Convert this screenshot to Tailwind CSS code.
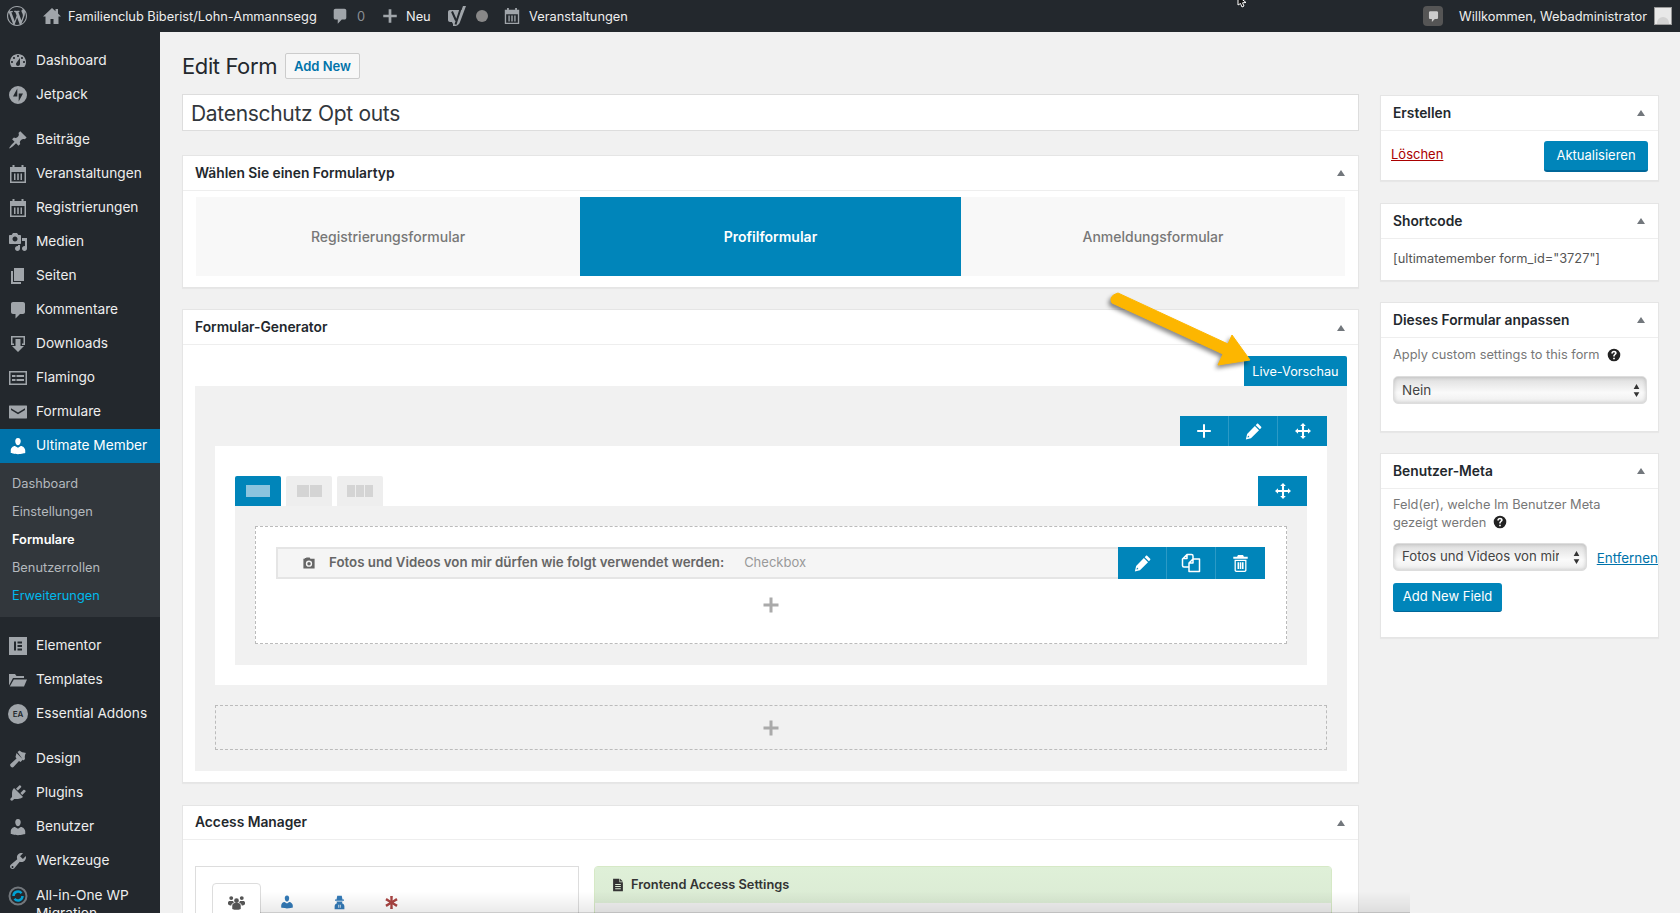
<!DOCTYPE html>
<html lang="de">
<head>
<meta charset="UTF-8">
<title>Edit Form</title>
<script src="https://cdn.jsdelivr.net/npm/@tailwindcss/browser@4"></script>
</head>
<body class="relative h-[913px] overflow-hidden bg-[#f1f1f1] font-['Inter','Liberation_Sans',sans-serif] text-[13px] text-[#444]">

<svg class="hidden">
  <symbol id="i-wp" viewBox="0 0 20 20"><path d="M20 10c0-5.510-4.490-10-10-10C4.480 0 0 4.490 0 10c0 5.520 4.480 10 10 10 5.510 0 10-4.480 10-10zM7.780 15.370L4.370 6.220c.55-.020 1.170-.080 1.170-.080.5-.060.44-1.130-.060-1.110 0 0-1.450.110-2.370.110-.18 0-.37 0-.58-.010C4.120 2.690 6.870 1.110 10 1.110c2.330 0 4.450.870 6.050 2.340-.68-.110-1.650.39-1.650 1.580 0 .74.450 1.360.900 2.100.35.610.550 1.360.550 2.460 0 1.490-1.400 5-1.400 5l-3.030-8.370c.54-.020.820-.170.820-.170.5-.050.44-1.250-.060-1.220 0 0-1.440.120-2.380.120-.870 0-2.330-.120-2.330-.120-.5-.030-.560 1.200-.060 1.220l.92.080 1.260 3.410zM17.410 10c.24-.640.740-1.870.430-4.250.7 1.290 1.050 2.710 1.050 4.250 0 3.290-1.730 6.240-4.400 7.780.97-2.590 1.940-5.200 2.920-7.780zM6.100 18.090C3.120 16.650 1.110 13.530 1.110 10c0-1.300.23-2.480.72-3.590C3.250 10.300 4.670 14.200 6.100 18.090zm4.030-6.630l2.580 6.980c-.86.290-1.740.450-2.710.450-.79 0-1.570-.110-2.290-.330.81-2.380 1.620-4.740 2.420-7.100z"/></symbol>
  <symbol id="i-home" viewBox="0 0 20 20"><path d="M10 2L1 10.500h2.500V18h5v-5h3v5h5v-7.500H19L16 7.600V3h-2.500v2.300z"/></symbol>
  <symbol id="i-comment" viewBox="0 0 20 20"><path d="M5 2h10c1.100 0 2 .9 2 2v8c0 1.100-.9 2-2 2h-3l-4.500 4.500V14H5c-1.100 0-2-.9-2-2V4c0-1.100.9-2 2-2z"/></symbol>
  <symbol id="i-plus" viewBox="0 0 20 20"><path d="M8.500 2.500h3v6h6v3h-6v6h-3v-6h-6v-3h6z"/></symbol>
  <symbol id="i-plus-mid" viewBox="0 0 20 20"><path d="M8.750 1.500h2.500v7.250h7.250v2.500h-7.250v7.250h-2.500v-7.250H1.500v-2.500h7.250z"/></symbol>
  <symbol id="i-yoast" viewBox="0 0 20 20"><path d="M4 4h11.500l1.500-4h3l-6 16c-.7 2-2 3.500-4.500 4H7v-2.500h-.5L6 16H4c-1.100 0-2-.9-2-2V6c0-1.100.9-2 2-2z"/><path d="M6 5.500l4 9M14.500 3L9.500 18.500" fill="none" stroke="#23282d" stroke-width="2"/></symbol>
  <symbol id="i-cal" viewBox="0 0 20 20"><path fill-rule="evenodd" d="M2 3h2.500V1h2v2h7V1h2v2H18v16H2zm1.500 5v9.500h13V8zM6 9.500h1.500V16H6zm3.200 0h1.600V16H9.200zm3.300 0H14V16h-1.500z"/></symbol>
  <symbol id="i-dash" viewBox="0 0 20 20"><path fill-rule="evenodd" d="M3.760 16h12.480c1.100-1.370 1.760-3.110 1.760-5 0-4.420-3.580-8-8-8s-8 3.580-8 8c0 1.890.66 3.630 1.760 5zM10 4c.55 0 1 .45 1 1s-.45 1-1 1-1-.45-1-1 .45-1 1-1zM6 6c.55 0 1 .45 1 1s-.45 1-1 1-1-.45-1-1 .45-1 1-1zm8 0c.55 0 1 .45 1 1s-.45 1-1 1-1-.45-1-1 .45-1 1-1zm-5.370 5.550L12 7v6c0 1.100-.9 2-2 2s-2-.9-2-2c0-.57.24-1.080.63-1.450zM4 10c.55 0 1 .45 1 1s-.45 1-1 1-1-.45-1-1 .45-1 1-1zm12 0c.55 0 1 .45 1 1s-.45 1-1 1-1-.45-1-1 .45-1 1-1z"/></symbol>
  <symbol id="i-jetpack" viewBox="0 0 20 20"><path fill-rule="evenodd" d="M10 1a9 9 0 1 0 0 18 9 9 0 0 0 0-18zM9.300 3.500v8H5zm1.400 13v-8H15z"/></symbol>
  <symbol id="i-pin" viewBox="0 0 20 20"><path d="M10.440 3.020l1.820-1.820 6.360 6.350-1.830 1.820c-1.050-.68-2.480-.57-3.410.36l-.75.75c-.92.93-1.040 2.350-.35 3.410l-1.830 1.820-2.410-2.410-2.800 2.790c-.42.42-3.380 2.710-3.800 2.290s1.860-3.390 2.280-3.810l2.790-2.790L4.100 9.360l1.830-1.820c1.050.69 2.480.57 3.400-.36l.75-.75c.93-.92 1.050-2.350.36-3.410z"/></symbol>
  <symbol id="i-media" viewBox="0 0 20 20"><path fill-rule="evenodd" d="M13 11V4c0-.55-.45-1-1-1h-1.670L9 1H5L3.670 3H2c-.55 0-1 .45-1 1v7c0 .55.45 1 1 1h10c.55 0 1-.45 1-1zM7 4.500c1.380 0 2.500 1.120 2.500 2.500S8.380 9.500 7 9.500 4.500 8.380 4.500 7 5.620 4.500 7 4.500zM14 6h5v10.500c0 1.380-1.120 2.500-2.500 2.500S14 17.880 14 16.500s1.120-2.500 2.500-2.500c.17 0 .34.020.5.050V9h-3V6zm-4 8.050V13h2v3.500c0 1.380-1.120 2.500-2.500 2.500S7 17.880 7 16.500 8.120 14 9.500 14c.17 0 .34.020.5.050z"/></symbol>
  <symbol id="i-page" viewBox="0 0 20 20"><path d="M6 15V2h10v13H6zm-1 1h8v2H3V5h2v11z"/></symbol>
  <symbol id="i-down" viewBox="0 0 20 20"><path fill-rule="evenodd" d="M3 2h14v9h-3V9.500h1.500v-6h-11v6H6V11H3zM7.500 5h5v7H16l-6 6-6-6h3.500z"/></symbol>
  <symbol id="i-flamingo" viewBox="0 0 20 20"><path fill-rule="evenodd" d="M1 3h18v14H1zm1.500 1.500v11h15v-11zM4 7h3.500v2H4zm4.500 0H16v2H8.500zM4 11h3.500v2H4zm4.500 0H16v2H8.500z"/></symbol>
  <symbol id="i-mail" viewBox="0 0 20 20"><path d="M1.500 3.500h17c.3 0 .5.200.5.500v12c0 .3-.2.500-.5.500h-17c-.3 0-.5-.2-.5-.5V4c0-.3.200-.5.500-.5zM3 6.200v1.700l7 4.300 7-4.300V6.200l-7 4.300z" fill-rule="evenodd"/></symbol>
  <symbol id="i-user" viewBox="0 0 20 20"><path d="M10 9.250c-2.270 0-2.730-3.440-2.730-3.440C7 4.020 7.820 2 9.970 2c2.160 0 2.980 2.020 2.710 3.810 0 0-.41 3.440-2.680 3.440zm0 2.570L12.720 10c2.390 0 4.520 2.330 4.520 4.530v2.490s-3.650 1.130-7.240 1.130c-3.650 0-7.240-1.130-7.240-1.130v-2.490c0-2.250 1.940-4.480 4.150-4.480z"/></symbol>
  <symbol id="i-elementor" viewBox="0 0 20 20"><path fill-rule="evenodd" d="M1 1h18v18H1zm5 4.500v9h2v-9zm3.500 0v2H14v-2zm0 3.500v2H14V9zm0 3.500v2H14v-2z"/></symbol>
  <symbol id="i-folder" viewBox="0 0 20 20"><path d="M1 4h6l1.500 2H16v2H5L1 15.500zM5.800 9.500H19l-3 7H1.800z"/></symbol>
  <symbol id="i-brush" viewBox="0 0 20 20"><path d="M9.500 3l2-1.500c2 1.500 3 2 6.500 2.500-1 1.500-1.500 3.500-1 6l-1.500 1.500zM8.500 4l6.500 6.500-2.500 2.500-1.500-1-5.500 6c-1.500 1.500-4.500-1.500-3-3l6-5.500-1-1.500z"/></symbol>
  <symbol id="i-plug" viewBox="0 0 20 20"><path d="M13.110 4.360L9.870 7.600 8 5.730l3.240-3.240c.35-.34 1.050-.2 1.560.32.52.51.66 1.210.31 1.550zm-8 1.770l.91-1.120 9.010 9.010-1.190.84c-.71.710-2.630 1.160-3.820 1.160H6.140L4.900 17.260c-.59.590-1.540.59-2.120 0-.59-.580-.59-1.530 0-2.120l1.240-1.240v-3.880c0-1.130.4-3.190 1.090-3.890zm7.260 3.970l3.240-3.240c.34-.35 1.040-.21 1.550.31.520.51.66 1.210.31 1.550l-3.240 3.250z"/></symbol>
  <symbol id="i-wrench" viewBox="0 0 20 20"><path fill-rule="evenodd" d="M16.680 9.770c-1.340 1.340-3.300 1.670-4.950.99l-5.410 6.520c-.99.990-2.590.99-3.580 0s-.99-2.590 0-3.580l6.520-5.420c-.68-1.650-.35-3.610.99-4.950 1.280-1.280 3.120-1.620 4.720-1.060l-2.890 2.890 2.820 2.820 2.860-2.870c.53 1.580.18 3.400-1.080 4.660zM3.810 16.740c.39.390 1.030.39 1.420 0 .38-.39.38-1.030 0-1.420-.39-.39-1.030-.39-1.420 0-.39.39-.39 1.030 0 1.420z"/></symbol>
  <symbol id="i-pencil" viewBox="0 0 20 20"><path fill-rule="evenodd" d="M15.500 1l3.500 3.500c.4.400.4 1 0 1.400l-1.500 1.500-4.900-4.900L14.100 1c.4-.4 1-.4 1.400 0zM11.600 3.500l4.900 4.900L7 18l-6 1.500L2.500 13zM3.600 14.800l-.7 2.300 2.300-.7z"/></symbol>
  <symbol id="i-move" viewBox="0 0 20 20"><path d="M10 0l3.500 3.800h-2.200v4.900h4.900V6.500L20 10l-3.800 3.500v-2.200h-4.900v4.900h2.200L10 20l-3.500-3.800h2.200v-4.900H3.800v2.200L0 10l3.800-3.500v2.200h4.900V3.800H6.500z"/></symbol>
  <symbol id="i-copy" viewBox="0 0 20 20"><path fill="none" stroke="currentColor" stroke-width="1.500" stroke-linejoin="round" d="M6 1.500h4.500c1 0 1.500.7 1.500 1.500v3M8 14H3c-.8 0-1.500-.5-1.500-1.500V6L6 1.500V5.500H2 M12 6H18.500V18.500H8V10z M8 10h4V6"/></symbol>
  <symbol id="i-trash" viewBox="0 0 20 20"><path fill-rule="evenodd" d="M7 0h6l1 2h4.500v2.500h-17V2H6zM3 5.500h14V18c0 1.100-.9 2-2 2H5c-1.100 0-2-.9-2-2zM4.500 7v10.500c0 .5.300 1 1 1h9c.7 0 1-.5 1-1V7zM6.500 8.500H8.500v8H6.500zm2.800 0h1.500v8H9.300zm2.300 0h2v8h-2z"/></symbol>
  <symbol id="i-camera" viewBox="0 0 20 20"><path fill-rule="evenodd" d="M6 2h5l1 2h6v14H2V4h2V3h2zm4 4.500a4.500 4.500 0 1 0 0 9 4.500 4.500 0 0 0 0-9zm0 2a2.500 2.500 0 1 1 0 5 2.500 2.500 0 0 1 0-5z"/></symbol>
  <symbol id="i-help" viewBox="0 0 20 20"><path fill-rule="evenodd" d="M10 1a9 9 0 1 0 0 18 9 9 0 0 0 0-18zM8.800 13.800h2.400V16H8.800zM10 4c2.200 0 3.800 1.200 3.800 3.200 0 1.500-.9 2.200-1.800 2.800-.7.500-.9.800-.9 1.600v.4H8.900v-.6c0-1.300.5-2 1.300-2.600.8-.6 1.200-.9 1.200-1.500 0-.7-.6-1.100-1.400-1.100-.9 0-1.500.5-1.600 1.500H6.100C6.200 5.400 7.700 4 10 4z"/></symbol>
  <symbol id="i-doc" viewBox="0 0 20 20"><path fill-rule="evenodd" d="M3 1h9v5h5v13H3zm10 0l4 4h-4zM6 8.500v1.500h8V8.500zm0 3v1.500h8v-1.500zm0 3V16h8v-1.500z"/></symbol>
  <symbol id="i-group" viewBox="0 0 20 20"><path d="M10 5a2.800 2.800 0 1 1 0 5.600A2.800 2.800 0 0 1 10 5zM3.800 2.500a2.300 2.300 0 1 1 0 4.600 2.300 2.300 0 0 1 0-4.600zm12.400 0a2.300 2.300 0 1 1 0 4.600 2.300 2.300 0 0 1 0-4.600zM5 17.500v-3.800c0-2 1.500-3 3-3h4c1.500 0 3 1 3 3v3.800c-3.300 1.400-6.700 1.400-10 0zM0 12V10c0-1 1-1.800 2-1.800h4c.1.800.6 1.500 1.200 1.900-1.800.6-3.200 1.800-3.400 3.500C2.400 13.500 1 13 0 12zm20 0c-1 1-2.400 1.500-3.800 1.600-.2-1.700-1.600-2.900-3.400-3.500.6-.4 1.100-1.100 1.200-1.900h4c1 0 2 .8 2 1.800z"/></symbol>
  <symbol id="i-spy" viewBox="0 0 20 20"><path fill-rule="evenodd" d="M7 1h6l1 5h2v1.500H4V6h2zM6 8.500h8c0 1-.5 2-1 2.500 2 .3 3.500 2 3.500 4v4h-13v-4c0-2 1.500-3.700 3.500-4-.5-.5-1-1.500-1-2.500zM8.500 13v4h1v-4zm2 0v4h1v-4z"/></symbol>
  <symbol id="i-aster" viewBox="0 0 20 20"><path d="M8 0h4l-.3 6.800 5.800-3.600 2 3.400-6.100 3.400 6.100 3.400-2 3.400-5.800-3.600L12 20H8l.3-6.800-5.800 3.600-2-3.400 6.100-3.400-6.100-3.400 2-3.400 5.800 3.600z"/></symbol>
  <symbol id="i-updown" viewBox="0 0 8 16"><path d="M4 0l3.500 6H.5zM4 16L.5 10h7z"/></symbol>
</svg>

<!-- admin bar -->
<header class="flex h-8 items-center bg-[#23282d] text-[12.8px] text-[#eee]">
  <svg class="ml-[7px] size-5 fill-[#a0a5aa]"><use href="#i-wp"/></svg>
  <svg class="ml-[15px] size-5 fill-[#a0a5aa]"><use href="#i-home"/></svg>
  <span class="ml-[6px] mt-[2px] w-[263px] whitespace-nowrap">Familienclub Biberist/Lohn-Ammannsegg</span>
  <svg class="size-[18px] fill-[#a0a5aa]"><use href="#i-comment"/></svg>
  <span class="ml-[8px] mt-[2px] w-2 text-[#8a8f94]">0</span>
  <svg class="ml-[16px] size-[18px] fill-[#a0a5aa]"><use href="#i-plus"/></svg>
  <span class="ml-[7px] mt-[2px] w-6">Neu</span>
  <svg class="ml-[16px] size-5 fill-[#a0a5aa]"><use href="#i-yoast"/></svg>
  <span class="ml-[10px] size-3 rounded-full bg-[#888]"></span>
  <svg class="ml-[15px] size-[18px] fill-[#a0a5aa]"><use href="#i-cal"/></svg>
  <span class="ml-[8px] mt-[2px]">Veranstaltungen</span>
  <span class="ml-auto flex size-[20px] items-center justify-center rounded-[4px] bg-[#555]"><svg class="size-[13px] fill-[#ccc]"><use href="#i-comment"/></svg></span>
  <span class="ml-[16px] mt-[2px] whitespace-nowrap">Willkommen, Webadministrator</span>
  <span class="ml-[7px] mr-2 flex h-[18px] w-[18px] items-end justify-center border border-[#999] bg-[#e8e8e8]"><span class="h-[7px] w-[12px] rounded-t-full bg-[#d2d2d2]"></span></span>
</header>

<div class="flex">
  <!-- sidebar -->
  <aside class="h-[881px] w-40 shrink-0 overflow-hidden bg-[#23282d] pt-3 text-[13.7px] text-[#eee]">
    <a class="flex h-[34px] items-center pb-px"><svg class="ml-2 mr-2 size-5 fill-[#a0a5aa]"><use href="#i-dash"/></svg>Dashboard</a>
    <a class="flex h-[34px] items-center pb-px"><svg class="ml-2 mr-2 size-5 fill-[#a0a5aa]"><use href="#i-jetpack"/></svg>Jetpack</a>
    <a class="mt-[11px] flex h-[34px] items-center pb-px"><svg class="ml-2 mr-2 size-5 fill-[#a0a5aa]"><use href="#i-pin"/></svg>Beiträge</a>
    <a class="flex h-[34px] items-center pb-px"><svg class="ml-2 mr-2 size-5 fill-[#a0a5aa]"><use href="#i-cal"/></svg>Veranstaltungen</a>
    <a class="flex h-[34px] items-center pb-px"><svg class="ml-2 mr-2 size-5 fill-[#a0a5aa]"><use href="#i-cal"/></svg>Registrierungen</a>
    <a class="flex h-[34px] items-center pb-px"><svg class="ml-2 mr-2 size-5 fill-[#a0a5aa]"><use href="#i-media"/></svg>Medien</a>
    <a class="flex h-[34px] items-center pb-px"><svg class="ml-2 mr-2 size-5 fill-[#a0a5aa]"><use href="#i-page"/></svg>Seiten</a>
    <a class="flex h-[34px] items-center pb-px"><svg class="ml-2 mr-2 size-5 fill-[#a0a5aa]"><use href="#i-comment"/></svg>Kommentare</a>
    <a class="flex h-[34px] items-center pb-px"><svg class="ml-2 mr-2 size-5 fill-[#a0a5aa]"><use href="#i-down"/></svg>Downloads</a>
    <a class="flex h-[34px] items-center pb-px"><svg class="ml-2 mr-2 size-5 fill-[#a0a5aa]"><use href="#i-flamingo"/></svg>Flamingo</a>
    <a class="flex h-[34px] items-center pb-px"><svg class="ml-2 mr-2 size-5 fill-[#a0a5aa]"><use href="#i-mail"/></svg>Formulare</a>
    <a class="flex h-[34px] items-center bg-[#0073aa] pb-px text-white"><svg class="ml-2 mr-2 size-5 fill-white"><use href="#i-user"/></svg>Ultimate Member</a>
    <div class="bg-[#32373c] pb-[7px] pt-[7px] text-[12.8px] text-[#b4b9be]">
      <a class="flex h-7 items-center pl-3">Dashboard</a>
      <a class="flex h-7 items-center pl-3">Einstellungen</a>
      <a class="flex h-7 items-center pl-3 font-semibold text-white">Formulare</a>
      <a class="flex h-7 items-center pl-3">Benutzerrollen</a>
      <a class="flex h-7 items-center pl-3 text-[#00b9eb]">Erweiterungen</a>
    </div>
    <a class="mt-3 flex h-[34px] items-center pb-px"><svg class="ml-2 mr-2 size-5 fill-[#a0a5aa]"><use href="#i-elementor"/></svg>Elementor</a>
    <a class="flex h-[34px] items-center pb-px"><svg class="ml-2 mr-2 size-5 fill-[#a0a5aa]"><use href="#i-folder"/></svg>Templates</a>
    <a class="flex h-[34px] items-center pb-px"><span class="ml-2 mr-2 flex size-5 items-center justify-center rounded-full bg-[#a0a5aa] text-[8px] font-semibold text-[#23282d]">EA</span>Essential Addons</a>
    <a class="mt-[11px] flex h-[34px] items-center pb-px"><svg class="ml-2 mr-2 size-5 fill-[#a0a5aa]"><use href="#i-brush"/></svg>Design</a>
    <a class="flex h-[34px] items-center pb-px"><svg class="ml-2 mr-2 size-5 fill-[#a0a5aa]"><use href="#i-plug"/></svg>Plugins</a>
    <a class="flex h-[34px] items-center pb-px"><svg class="ml-2 mr-2 size-5 fill-[#a0a5aa]"><use href="#i-user"/></svg>Benutzer</a>
    <a class="flex h-[34px] items-center pb-px"><svg class="ml-2 mr-2 size-5 fill-[#a0a5aa]"><use href="#i-wrench"/></svg>Werkzeuge</a>
    <a class="flex items-start pt-2 leading-[18px]"><svg class="ml-2 mr-2 size-5 shrink-0" viewBox="0 0 20 20"><circle cx="10" cy="10" r="8.500" fill="none" stroke="#72777c" stroke-width="2"/><path d="M5.500 10a4.500 4.500 0 0 1 8-2.800M14.500 10a4.500 4.500 0 0 1-8 2.800" fill="none" stroke="#00a0d2" stroke-width="2.500"/></svg><span>All-in-One WP Migration</span></a>
  </aside>

  <!-- left column -->
  <main class="ml-[22px] w-[1177px] shrink-0 pt-[21px]">
    <div class="flex h-[26px] items-center">
      <h1 class="text-[22px] tracking-[-0.4px] text-[#23282d]">Edit Form</h1>
      <a class="ml-[8px] flex h-[26px] w-[75px] items-center justify-center rounded-[2px] border border-[#ccc] bg-[#f7f7f7] pt-px font-semibold text-[#0073aa]">Add New</a>
    </div>
    <div class="mt-[15px] flex h-[37px] items-center border border-[#ddd] bg-white pl-2 pt-[2px] text-[21px] tracking-[-0.3px] text-[#32373c]">Datenschutz Opt outs</div>

    <section class="mt-6 h-[133px] border border-[#e5e5e5] bg-white shadow-[0_1px_1px_rgba(0,0,0,0.04)]">
      <div class="flex h-[35px] items-center justify-between border-b border-[#eee] pl-3 pr-[13px] text-[13.8px] font-semibold text-[#23282d]">Wählen Sie einen Formulartyp<span class="h-0 w-0 border-x-[4px] border-b-[6px] border-x-transparent border-b-[#72777c]"></span></div>
      <div class="mx-[13px] mt-[6px] grid h-[79px] grid-cols-[384px_381px_1fr] text-center text-sm font-medium text-[#777]">
        <div class="flex items-center justify-center bg-[#f8f8f8]">Registrierungsformular</div>
        <div class="flex items-center justify-center bg-[#0085ba] font-semibold text-white">Profilformular</div>
        <div class="flex items-center justify-center bg-[#f8f8f8]">Anmeldungsformular</div>
      </div>
    </section>

    <section class="mt-[21px] h-[474px] border border-[#e5e5e5] bg-white pl-3 pr-[11px] shadow-[0_1px_1px_rgba(0,0,0,0.04)]">
      <div class="-ml-3 -mr-[11px] flex h-[35px] items-center justify-between border-b border-[#eee] pl-3 pr-[13px] pt-px text-[13.8px] font-semibold text-[#23282d]">Formular-Generator<span class="h-0 w-0 border-x-[4px] border-b-[6px] border-x-transparent border-b-[#72777c]"></span></div>
      <div class="flex h-[41px] items-end justify-end">
        <a class="flex h-[30px] w-[103px] items-center justify-center rounded-t-[2px] bg-[#0085ba] pt-px text-[12.7px] text-white">Live-Vorschau</a>
      </div>
      <div class="h-[385px] bg-[#f1f1f1] px-5 pt-[30px]">
        <div class="flex h-[30px] justify-end">
          <span class="flex w-[49px] items-center justify-center border-r border-[#2b9ac6] bg-[#0085ba]"><svg class="size-4 fill-white"><use href="#i-plus-mid"/></svg></span>
          <span class="flex w-[49px] items-center justify-center border-r border-[#2b9ac6] bg-[#0085ba]"><svg class="size-[17px] fill-white"><use href="#i-pencil"/></svg></span>
          <span class="flex w-[49px] items-center justify-center bg-[#0085ba]"><svg class="size-4 fill-white"><use href="#i-move"/></svg></span>
        </div>
        <div class="h-[239px] bg-white px-5 pt-[30px]">
          <div class="flex h-[30px] gap-[5px]">
            <span class="flex w-[46px] items-center justify-center rounded-t-[2px] bg-[#0085ba]"><span class="h-3 w-6 bg-[#8cc4de]"></span></span>
            <span class="flex w-[46px] items-center justify-center gap-px rounded-t-[2px] bg-[#eee]"><span class="h-3 w-3 bg-[#d4d4d4]"></span><span class="h-3 w-3 bg-[#d4d4d4]"></span></span>
            <span class="flex w-[46px] items-center justify-center gap-px rounded-t-[2px] bg-[#eee]"><span class="h-3 w-2 bg-[#d4d4d4]"></span><span class="h-3 w-2 bg-[#d4d4d4]"></span><span class="h-3 w-2 bg-[#d4d4d4]"></span></span>
            <span class="ml-auto flex w-[49px] items-center justify-center bg-[#0085ba]"><svg class="size-4 fill-white"><use href="#i-move"/></svg></span>
          </div>
          <div class="h-[159px] bg-[#f1f1f1] p-5">
            <div class="h-[118px] border border-dashed border-[#bbb] bg-white pl-5 pr-[21px] pt-5">
              <div class="flex h-8 items-center border-2 border-[#e5e5e5] bg-[#f5f5f5]">
                <svg class="ml-6 size-[14px] fill-[#666]"><use href="#i-camera"/></svg>
                <span class="ml-[13px] text-[13.3px] font-semibold text-[#666]">Fotos und Videos von mir dürfen wie folgt verwendet werden:</span>
                <span class="ml-5 text-[#999]">Checkbox</span>
                <span class="-my-[2px] -mr-[2px] ml-auto flex h-8 text-white">
                  <span class="flex w-[49px] items-center justify-center border-r border-[#2b9ac6] bg-[#0085ba]"><svg class="size-[17px] fill-white"><use href="#i-pencil"/></svg></span>
                  <span class="flex w-[49px] items-center justify-center border-r border-[#2b9ac6] bg-[#0085ba]"><svg class="size-5"><use href="#i-copy"/></svg></span>
                  <span class="flex w-[49px] items-center justify-center bg-[#0085ba]"><svg class="size-[17px] fill-white"><use href="#i-trash"/></svg></span>
                </span>
              </div>
              <div class="flex h-[51px] items-center justify-center"><svg class="size-5 fill-[#aaa]"><use href="#i-plus"/></svg></div>
            </div>
          </div>
        </div>
        <div class="mt-5 flex h-[45px] items-center justify-center border border-dashed border-[#bbb]"><svg class="size-5 fill-[#aaa]"><use href="#i-plus"/></svg></div>
      </div>
    </section>

    <section class="mt-[22px] h-[108px] overflow-hidden border-x border-t border-[#e5e5e5] bg-white">
      <div class="flex h-[34px] items-center justify-between border-b border-[#eee] pl-3 pr-[13px] text-[13.8px] font-semibold text-[#23282d]">Access Manager<span class="h-0 w-0 border-x-[4px] border-b-[6px] border-x-transparent border-b-[#72777c]"></span></div>
      <div class="flex gap-[15px] pl-3 pt-[26px]">
        <div class="h-[60px] w-[384px] border border-[#ddd] px-4 pt-4">
          <div class="flex">
            <span class="flex h-[38px] w-[49px] items-center justify-center rounded-t border border-[#ddd]"><svg class="size-[17px] fill-[#555]"><use href="#i-group"/></svg></span>
            <span class="flex h-[38px] w-[52px] items-center justify-center"><svg class="size-[16px] fill-[#337ab7]"><use href="#i-user"/></svg></span>
            <span class="flex h-[38px] w-[52px] items-center justify-center"><svg class="size-[15px] fill-[#337ab7]"><use href="#i-spy"/></svg></span>
            <span class="flex h-[38px] w-[52px] items-center justify-center"><svg class="size-[13px] fill-[#a94442]"><use href="#i-aster"/></svg></span>
          </div>
        </div>
        <div class="h-[60px] w-[738px] rounded-t-[4px] border border-[#d6e9c6] bg-[#f0f0f0]">
          <div class="flex h-[36px] items-center gap-[6px] bg-[linear-gradient(#dff0d8,#dbebd4)] pl-[16px] text-[12.8px] font-semibold text-[#333]"><svg class="size-[14px] fill-[#333]"><use href="#i-doc"/></svg>Frontend Access Settings</div>
        </div>
      </div>
    </section>
  </main>

  <!-- right column -->
  <div class="ml-[21px] w-[279px] shrink-0 pt-[63px]">
    <section class="h-[86px] border border-[#e5e5e5] bg-white shadow-[0_1px_1px_rgba(0,0,0,0.04)]">
      <div class="flex h-[35px] items-center justify-between border-b border-[#eee] pl-3 pr-[13px] text-[13.8px] font-semibold text-[#23282d]">Erstellen<span class="h-0 w-0 border-x-[4px] border-b-[6px] border-x-transparent border-b-[#72777c]"></span></div>
      <div class="flex items-start justify-between pl-[10px] pr-[10px] pt-[10px]">
        <a class="mt-[4px] text-[#a00] underline">Löschen</a>
        <a class="flex h-[31px] w-[104px] items-center justify-center rounded-[3px] border-b-2 border-[#006799] bg-[#0085ba] text-white">Aktualisieren</a>
      </div>
    </section>
    <section class="mt-[22px] h-[78px] border border-[#e5e5e5] bg-white shadow-[0_1px_1px_rgba(0,0,0,0.04)]">
      <div class="flex h-[35px] items-center justify-between border-b border-[#eee] pl-3 pr-[13px] text-[13.8px] font-semibold text-[#23282d]">Shortcode<span class="h-0 w-0 border-x-[4px] border-b-[6px] border-x-transparent border-b-[#72777c]"></span></div>
      <p class="pl-3 pt-3 text-[12.8px] leading-4 text-[#555]">[ultimatemember form_id="3727"]</p>
    </section>
    <section class="mt-[21px] h-[130px] border border-[#e5e5e5] bg-white shadow-[0_1px_1px_rgba(0,0,0,0.04)]">
      <div class="flex h-[35px] items-center justify-between border-b border-[#eee] pl-3 pr-[13px] text-[13.8px] font-semibold text-[#23282d]">Dieses Formular anpassen<span class="h-0 w-0 border-x-[4px] border-b-[6px] border-x-transparent border-b-[#72777c]"></span></div>
      <p class="flex items-center gap-[7px] pl-3 pt-[9px] text-[12.8px] leading-4 text-[#777]">Apply custom settings to this form<svg class="size-[14px] fill-[#222]"><use href="#i-help"/></svg></p>
      <div class="ml-3 mt-[13px] flex h-[28px] w-[254px] items-center justify-between rounded-[5px] border border-[#ddd] bg-[linear-gradient(#dcdcdc,#fafafa_60%,#eee)] pl-2 pr-[6px] text-[13.5px] text-[#444] shadow-[inset_0_0_4px_rgba(0,0,0,0.18)]">Nein<svg class="h-[13px] w-[7px] fill-[#333]"><use href="#i-updown"/></svg></div>
    </section>
    <section class="mt-[21px] h-[185px] border border-[#e5e5e5] bg-white shadow-[0_1px_1px_rgba(0,0,0,0.04)]">
      <div class="flex h-[35px] items-center justify-between border-b border-[#eee] pl-3 pr-[13px] text-[13.8px] font-semibold text-[#23282d]">Benutzer-Meta<span class="h-0 w-0 border-x-[4px] border-b-[6px] border-x-transparent border-b-[#72777c]"></span></div>
      <p class="pl-3 pt-[7px] text-[12.8px] leading-[17.5px] text-[#777]">Feld(er), welche Im Benutzer Meta<br><span class="inline-flex items-center gap-[7px]">gezeigt werden<svg class="size-[14px] fill-[#222]"><use href="#i-help"/></svg></span></p>
      <div class="mt-[12px] flex items-center pl-3">
        <div class="flex h-[28px] w-[194px] items-center justify-between rounded-[5px] border border-[#ddd] bg-[linear-gradient(#dcdcdc,#fafafa_60%,#eee)] pl-2 pr-[6px] text-[13.2px] text-[#444] shadow-[inset_0_0_4px_rgba(0,0,0,0.18)]"><span class="w-[157px] overflow-hidden whitespace-nowrap">Fotos und Videos von mir</span><svg class="h-[13px] w-[7px] fill-[#333]"><use href="#i-updown"/></svg></div>
        <a class="ml-[10px] mt-[3px] text-[13.4px] text-[#0073aa] underline">Entfernen</a>
      </div>
      <a class="ml-3 mt-3 flex h-[29px] w-[109px] items-center justify-center rounded-[3px] border-b border-[#006799] bg-[#0085ba] text-white">Add New Field</a>
    </section>
  </div>
</div>

<!-- annotation arrow drawn over the screenshot -->
<svg class="pointer-events-none absolute left-[1100px] top-[285px] h-[100px] w-[170px] overflow-visible drop-shadow-[-2px_3px_2px_rgba(0,0,0,0.45)]" viewBox="1100 285 170 100">
  <path d="M1118 293 L1228 344 L1232 335 L1250 360 L1218 365 L1223 354 L1112 303 Q1108 296 1118 293 Z" fill="#fdb600" stroke="#fdb600" stroke-linejoin="round" stroke-width="1"/>
</svg>
<!-- mouse pointer -->
<svg class="absolute left-[1237px] top-0 h-[8px] w-[12px]" viewBox="0 0 12 8"><path d="M1 -4 L1 5 L3.500 3.500 L5 7 L7 6 L5.500 2.800 L9 2.500 Z" fill="#111" stroke="#fff" stroke-width="1"/></svg>
<!-- window shadow along the bottom of the screen capture -->
<div class="pointer-events-none absolute bottom-0 left-[260px] right-[270px] h-[22px] border-b border-black/20 bg-gradient-to-b from-transparent to-black/8"></div>

</body>
</html>
